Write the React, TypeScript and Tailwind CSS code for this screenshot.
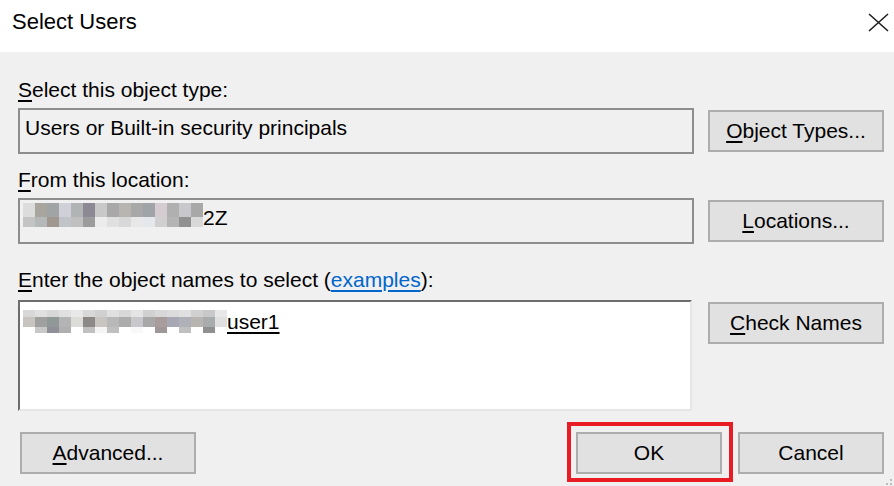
import React from "react";

const loc1 = ["#dcdcdc","#a8a49e","#a0a4a4","#d0d0d8","#b0b4b4","#8c8894","#c8c8c8","#a8a8a8","#b8b4b0","#a8a8a8","#a0a4a8","#d4ccd0","#b0b0b0","#c8c8cc","#a8a8a8"];
const loc2 = ["#c4c4c4","#b4b8b8","#a09890","#c0c4c8","#c0c0c0","#9c9c9c","#ececec","#e0e0e0","#d8d8d8","#e8e8e8","#e4e8ec","#d0d0d0","#b4b4b4","#909090","#d8d8d8"];

const nm1 = ["#d8d8d8","#e0e0e0","#d8d8d8","#e0e0e0","#e8e8e8","#d8d8d8","#d0d0d0","#e0e0e0","#d8d8d8","#e4e4e4","#d0d0d0","#d8d8d8","#dcdcdc","#e0e0e0","#d0d0d0","#c8c8c8","#e8e8e8"];
const nm2 = ["#c8c4c0","#a0a0a0","#909898","#b4b4b4","#dcdcd8","#8c8888","#c8c4c0","#b8b8b8","#acacac","#c8c8cc","#a8a8a8","#a89c9c","#a8a8b4","#b0b0b8","#b8b4b0","#a8acac","#e0e0e0"];
const nm3 = ["#ffffff","#c8c8c8","#909098","#b0b0b0","#ffffff","#c0c0c0","#f4f4f4","#c0c0c0","#ffffff","#f8f8f8","#ffffff","#a09898","#ffffff","#c0c0c0","#ffffff","#909090","#ffffff"];

function Cells({ colors, h }: { colors: string[]; h: string }) {
  return (
    <div className="flex">
      {colors.map((c, i) => (
        <div key={i} className={`w-[12px] ${h}`} style={{ backgroundColor: c }} />
      ))}
    </div>
  );
}

function Label({ accel, rest, children }: { accel: string; rest: string; children?: React.ReactNode }) {
  return (
    <div className="h-[24px] whitespace-nowrap">
      <span className="underline underline-offset-[3px]">{accel}</span>
      {rest}
      {children}
    </div>
  );
}

function Btn({ children, className = "" }: { children: React.ReactNode; className?: string }) {
  return (
    <div
      className={`h-[42px] shrink-0 border-2 border-[#adadad] bg-[#e1e1e1] flex items-center justify-center whitespace-nowrap ${className}`}
    >
      {children}
    </div>
  );
}

function U({ children }: { children: React.ReactNode }) {
  return <span className="underline underline-offset-[3px]">{children}</span>;
}

export default function App() {
  return (
    <div className="relative w-[894px] h-[486px] overflow-hidden flex flex-col bg-[#f0f0f0] text-black font-['Liberation_Sans',Arial,sans-serif] text-[21px] leading-[24px]">
      <div className="h-[52px] shrink-0 bg-white flex items-start justify-between pl-[12px] pr-[5px] pt-[9px]">
        <span className="text-[22px] leading-[26px]">Select Users</span>
        <svg className="mt-[4px]" width="21" height="19" viewBox="0 0 21 19">
          <path d="M1 1 L20 18 M20 1 L1 18" stroke="#1f1f1f" strokeWidth="1.6" fill="none" />
        </svg>
      </div>

      <div className="flex-1 flex flex-col pl-[18px] pr-[10px] pt-[26px]">
        <Label accel="S" rest="elect this object type:" />
        <div className="mt-[6px] flex items-center gap-[14px]">
          <div className="w-[676px] h-[46px] border-2 border-[#8d8d8d] bg-[#f0f0f0] pl-[5px] pt-[6px] whitespace-nowrap">
            Users or Built-in security principals
          </div>
          <Btn className="w-[176px]">
            <U>O</U>bject Types...
          </Btn>
        </div>

        <div className="mt-[14px]">
          <Label accel="F" rest="rom this location:" />
        </div>
        <div className="mt-[6px] flex items-center gap-[14px]">
          <div className="w-[676px] h-[46px] border-2 border-[#8d8d8d] bg-[#f0f0f0] pl-[3px] pt-[3px] flex items-start">
            <div className="flex flex-col">
              <Cells colors={loc1} h="h-[14px]" />
              <Cells colors={loc2} h="h-[10px]" />
            </div>
            <span className="pt-[3px]">2Z</span>
          </div>
          <Btn className="w-[176px]">
            <U>L</U>ocations...
          </Btn>
        </div>

        <div className="mt-[24px]">
          <Label accel="E" rest="nter the object names to select (">
            <span className="text-[#0066cc] underline underline-offset-[3px]">examples</span>):
          </Label>
        </div>
        <div className="mt-[8px] flex items-start gap-[16px]">
          <div className="w-[674px] h-[111px] bg-white border-2 border-t-[#6d6d6d] border-l-[#6d6d6d] border-r-[#e6e6e6] border-b-[#e6e6e6] pl-[3px] pt-[8px] flex items-start">
            <div className="flex flex-col">
              <Cells colors={nm1} h="h-[7px]" />
              <Cells colors={nm2} h="h-[10px]" />
              <Cells colors={nm3} h="h-[6px]" />
            </div>
            <span className="underline underline-offset-[3px] pt-[0px]">user1</span>
          </div>
          <Btn className="w-[176px] mt-[2px]">
            <U>C</U>heck Names
          </Btn>
        </div>

        <div className="mt-[21px] flex items-start">
          <Btn className="w-[176px] ml-[2px]">
            <U>A</U>dvanced...
          </Btn>
          <div className="flex-1" />
          <div className="relative">
            <Btn className="w-[146px]">OK</Btn>
            <div className="pointer-events-none absolute -left-[9px] -top-[10px] -right-[11px] -bottom-[8px] border-4 border-[#e81c24]" />
          </div>
          <Btn className="w-[146px] ml-[16px]">Cancel</Btn>
        </div>
      </div>

      <div className="absolute right-[2px] bottom-[1px] flex flex-col items-end gap-[2px]">
        <div className="w-[2px] h-[2px] bg-[#bcbcbc]" />
        <div className="flex gap-[2px]">
          <div className="w-[2px] h-[2px] bg-[#bcbcbc]" />
          <div className="w-[2px] h-[2px] bg-[#bcbcbc]" />
        </div>
      </div>
    </div>
  );
}
